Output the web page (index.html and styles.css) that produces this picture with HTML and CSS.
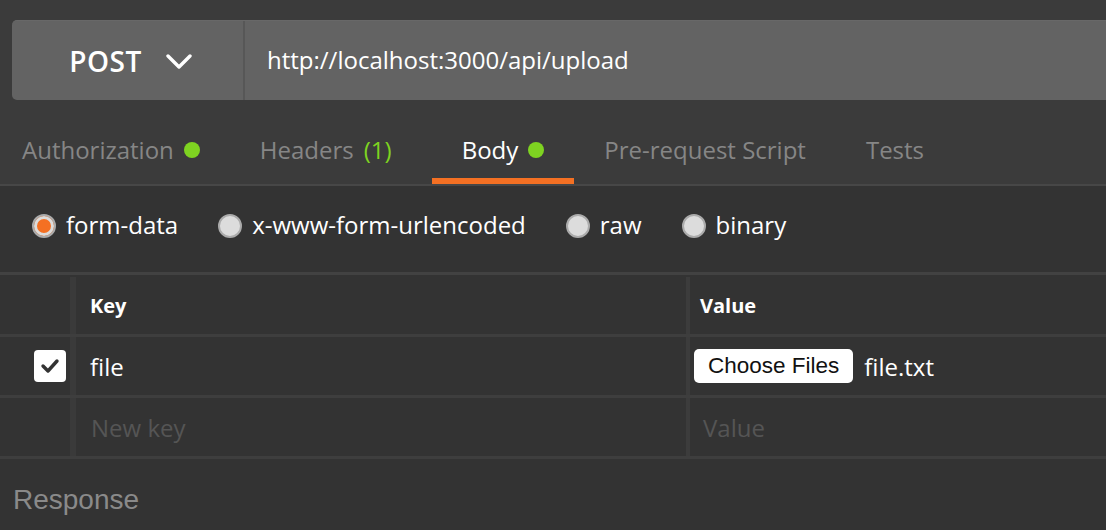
FILE: index.html
```html
<!DOCTYPE html>
<html lang="en">
<head>
    <meta charset="UTF-8">
    <title>Request Builder</title>
    <link rel="stylesheet" href="styles.css">
</head>
<body>
    <div class="top">
        <div class="urlbar">
            <div class="method">
                <span>POST</span>
                <svg class="chevron" width="26" height="16" viewBox="0 0 26 16">
                    <polyline points="2,2 13,13 24,2" fill="none" stroke="#fff" stroke-width="3.4" stroke-linecap="round" stroke-linejoin="round"/>
                </svg>
            </div>
            <div class="url">http://localhost:3000/api/upload</div>
        </div>

        <div class="tabs">
            <div class="tab first">Authorization <span class="dot"></span></div>
            <div class="tab headers">Headers <span class="count">(1)</span></div>
            <div class="tab active">Body <span class="dot"></span></div>
            <div class="tab">Pre-request Script</div>
            <div class="tab">Tests</div>
        </div>
    </div>

    <div class="body-types">
        <label class="radio"><span class="circle checked"></span>form-data</label>
        <label class="radio"><span class="circle"></span>x-www-form-urlencoded</label>
        <label class="radio"><span class="circle"></span>raw</label>
        <label class="radio"><span class="circle"></span>binary</label>
    </div>

    <div class="params">
        <div class="row head">
            <div class="cell check"></div>
            <div class="cell key">Key</div>
            <div class="cell value">Value</div>
        </div>
        <div class="row">
            <div class="cell check">
                <span class="checkbox">
                    <svg width="22" height="18" viewBox="0 0 22 18">
                        <polyline points="4,9 9,14 18,4" fill="none" stroke="#333" stroke-width="3.4" stroke-linecap="round" stroke-linejoin="round"/>
                    </svg>
                </span>
            </div>
            <div class="cell key">file</div>
            <div class="cell value file">
                <span class="file-btn">Choose Files</span>
                <span class="file-name">file.txt</span>
            </div>
        </div>
        <div class="row">
            <div class="cell check"></div>
            <div class="cell key placeholder">New key</div>
            <div class="cell value placeholder">Value</div>
        </div>
    </div>

    <div class="response">Response</div>
</body>
</html>
```

FILE: styles.css
```css
* {
    margin: 0;
    padding: 0;
    box-sizing: border-box;
}

body {
    font-family: 'Open Sans', 'Noto Sans', sans-serif;
    background: #333333;
    color: #fff;
    font-size: 24px;
    overflow: hidden;
}

.top {
    background: #3b3b3b;
    padding-top: 20px;
    border-bottom: 2px solid #474747;
}

.urlbar {
    display: flex;
    height: 80px;
    margin-left: 12px;
    background: #636363;
    border-radius: 5px 0 0 5px;
    border-top: 1px solid #686868;
}

.method {
    width: 233px;
    display: flex;
    align-items: center;
    justify-content: center;
    gap: 24px;
    font-size: 28px;
    font-weight: 600;
    letter-spacing: 0.5px;
    border-right: 2px solid #575757;
    padding-left: 6px;
}

.chevron {
    margin-top: 2px;
}

.url {
    display: flex;
    align-items: center;
    padding-left: 22px;
    font-size: 24px;
    padding-bottom: 2px;
}

.tabs {
    display: flex;
    height: 84px;
    padding-left: 22px;
}

.tab {
    display: flex;
    align-items: center;
    gap: 10px;
    padding: 20px 30px 0;
    color: #868686;
    border-bottom: 6px solid transparent;
}

.tab.first {
    padding-left: 0;
}

.tab.headers {
    padding-right: 40px;
}

.tab.active {
    color: #fff;
    border-bottom-color: #f47023;
}

.dot {
    width: 16px;
    height: 16px;
    border-radius: 50%;
    background: #7ed321;
    margin-top: 2px;
}

.count {
    color: #7ed321;
}

.body-types {
    display: flex;
    align-items: center;
    height: 89px;
    padding-left: 32px;
    gap: 40px;
    border-bottom: 3px solid #424242;
}

.radio {
    display: flex;
    align-items: center;
    gap: 10px;
    padding-bottom: 10px;
}

.circle {
    width: 24px;
    height: 24px;
    border-radius: 50%;
    background: #dcdcdc;
    border: 2px solid #ababab;
    margin-top: 4px;
}

.circle.checked {
    background: #f47023;
    box-shadow: inset 0 0 0 3px #dcdcdc;
}

.row {
    display: flex;
    height: 61px;
    border-bottom: 3px solid #3e3e3e;
}

.row.head {
    height: 62px;
    font-size: 20px;
    font-weight: 700;
    padding-top: 2px;
}

.cell {
    display: flex;
    align-items: center;
}

.cell.check {
    width: 70px;
    justify-content: flex-end;
    padding-right: 4px;
}

.cell.key {
    width: 616px;
    border-left: 6px solid #3a3a3a;
    padding-left: 14px;
}

.cell.value {
    flex: 1;
    border-left: 4px solid #3c3c3c;
    padding-left: 10px;
}

.cell.value.file {
    padding-left: 4px;
}

.placeholder {
    color: #555;
}

.cell.key.placeholder {
    padding-left: 15px;
}

.cell.value.placeholder {
    padding-left: 13px;
}

.checkbox {
    width: 32px;
    height: 32px;
    background: #fff;
    border-radius: 4px;
    display: flex;
    align-items: center;
    justify-content: center;
}

.file-btn {
    font-family: 'Liberation Sans', Arial, sans-serif;
    background: #fff;
    color: #111;
    font-size: 22.5px;
    border-radius: 5px;
    padding: 4px 14px 4px;
    margin-right: 11px;
}

.response {
    font-family: 'Liberation Sans', Arial, sans-serif;
    font-size: 28px;
    color: #8a8a8a;
    padding: 25px 0 0 13px;
}
```
